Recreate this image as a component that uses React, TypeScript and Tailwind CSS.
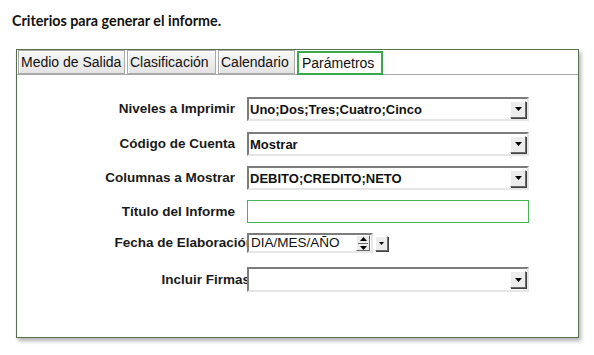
import React from "react";

const Arrow = ({ w = 7, h = 4 }: { w?: number; h?: number }) => (
  <svg width={w} height={h} viewBox={`0 0 ${w} ${h}`}>
    <polygon points={`0,0 ${w},0 ${w / 2},${h}`} fill="#000" />
  </svg>
);

const DropBtn = ({ small = false }: { small?: boolean }) => (
  <div
    className={`flex items-center justify-center bg-[#ececec] border border-t-white border-l-white border-r-[#6a6a6a] border-b-[#6a6a6a] shadow-[1px_1px_0_#404040] ${
      small ? "w-[13px] h-[15px]" : "w-[16px] h-[17px]"
    }`}
  >
    <Arrow w={small ? 5 : 7} h={small ? 3 : 4} />
  </div>
);

const Select = ({ value, h = 24 }: { value: string; h?: number }) => (
  <div
    className="relative z-10 bg-white w-[282px] flex items-center justify-between border-2 border-t-[#7c7c7c] border-l-[#7c7c7c] border-b-[#e6e6e6] border-r-[#e6e6e6] pl-[1px] pr-[1px]"
    style={{ height: h }}
  >
    <span className="text-[13px] font-bold text-[#111] leading-none whitespace-nowrap">{value}</span>
    <DropBtn />
  </div>
);

const Label = ({ children, w = 218, mr = 12 }: { children: React.ReactNode; w?: number; mr?: number }) => (
  <div
    className="text-right text-[13.5px] font-bold text-[#1a1a1a] whitespace-nowrap leading-none"
    style={{ width: w, marginRight: mr }}
  >
    {children}
  </div>
);

const Tab = ({ label, w, active = false }: { label: string; w: number; active?: boolean }) =>
  active ? (
    <div
      className="h-[24px] mt-[1px] border-2 border-[#3aa84c] bg-white flex items-center pl-[3px] text-[14px] text-[#111]"
      style={{ width: w }}
    >
      {label}
    </div>
  ) : (
    <div
      className="h-[24px] border border-[#a9a9a9] bg-gradient-to-b from-[#f7f7f7] to-[#e4e4e4] shadow-[inset_1px_1px_0_#fff] flex items-center pl-[2px] text-[14px] text-[#111]"
      style={{ width: w }}
    >
      {label}
    </div>
  );

export default function App() {
  return (
    <div
      className="w-[594px] h-[355px] bg-white overflow-hidden"
      style={{ fontFamily: '"Liberation Sans", Arial, sans-serif' }}
    >
      <div
        className="pt-[13px] pl-[12px] text-[14.3px] font-bold leading-[16px] text-[#111]"
        style={{ fontFamily: 'Lato, "Open Sans", sans-serif' }}
      >
        Criterios para generar el informe.
      </div>
      <div className="ml-[16px] mt-[20px] w-[563px] h-[289px] border border-[#58704c] shadow-[2px_3px_4px_rgba(0,0,0,0.3)] bg-white">
        <div className="flex items-start h-[25px] border-b border-[#a9a9a9] pl-[1px] gap-[2px]">
          <Tab label="Medio de Salida" w={107} />
          <Tab label="Clasificación" w={89} />
          <Tab label="Calendario" w={77} />
          <Tab label="Parámetros" w={86} active />
        </div>
        <div className="flex flex-col">
          <div className="flex items-center mt-[22px]">
            <Label>Niveles a Imprimir</Label>
            <Select value="Uno;Dos;Tres;Cuatro;Cinco" />
          </div>
          <div className="flex items-center mt-[11px]">
            <Label>Código de Cuenta</Label>
            <Select value="Mostrar" />
          </div>
          <div className="flex items-center mt-[10px]">
            <Label>Columnas a Mostrar</Label>
            <Select value="DEBITO;CREDITO;NETO" />
          </div>
          <div className="flex items-center mt-[10px]">
            <Label>Título del Informe</Label>
            <div className="w-[282px] h-[23px] border border-[#45b457] bg-white" />
          </div>
          <div className="flex items-center mt-[10px]">
            <Label w={237} mr={-7}>Fecha de Elaboración</Label>
            <div className="relative z-10 flex items-center gap-[2px]">
              <div className="w-[126px] h-[20px] bg-white flex items-center justify-between border-2 border-t-[#7c7c7c] border-l-[#7c7c7c] border-b-[#e6e6e6] border-r-[#e6e6e6] pl-[2px] pr-[1px]">
                <span className="text-[13.5px] text-[#111] leading-none whitespace-nowrap">DIA/MES/AÑO</span>
                <div className="w-[14px] h-[16px] bg-[#ececec] flex flex-col items-center justify-center gap-[2px] border border-t-white border-l-white border-r-[#6a6a6a] border-b-[#6a6a6a]">
                  <svg width="7" height="4" viewBox="0 0 7 4">
                    <polygon points="0,4 7,4 3.5,0" fill="#000" />
                  </svg>
                  <div className="w-[10px] h-px bg-[#6a6a6a]" />
                  <svg width="7" height="4" viewBox="0 0 7 4">
                    <polygon points="0,0 7,0 3.5,4" fill="#000" />
                  </svg>
                </div>
              </div>
              <DropBtn small />
            </div>
          </div>
          <div className="flex items-center mt-[14px]">
            <Label w={233} mr={-3}>Incluir Firmas</Label>
            <Select value="" h={25} />
          </div>
        </div>
      </div>
    </div>
  );
}
